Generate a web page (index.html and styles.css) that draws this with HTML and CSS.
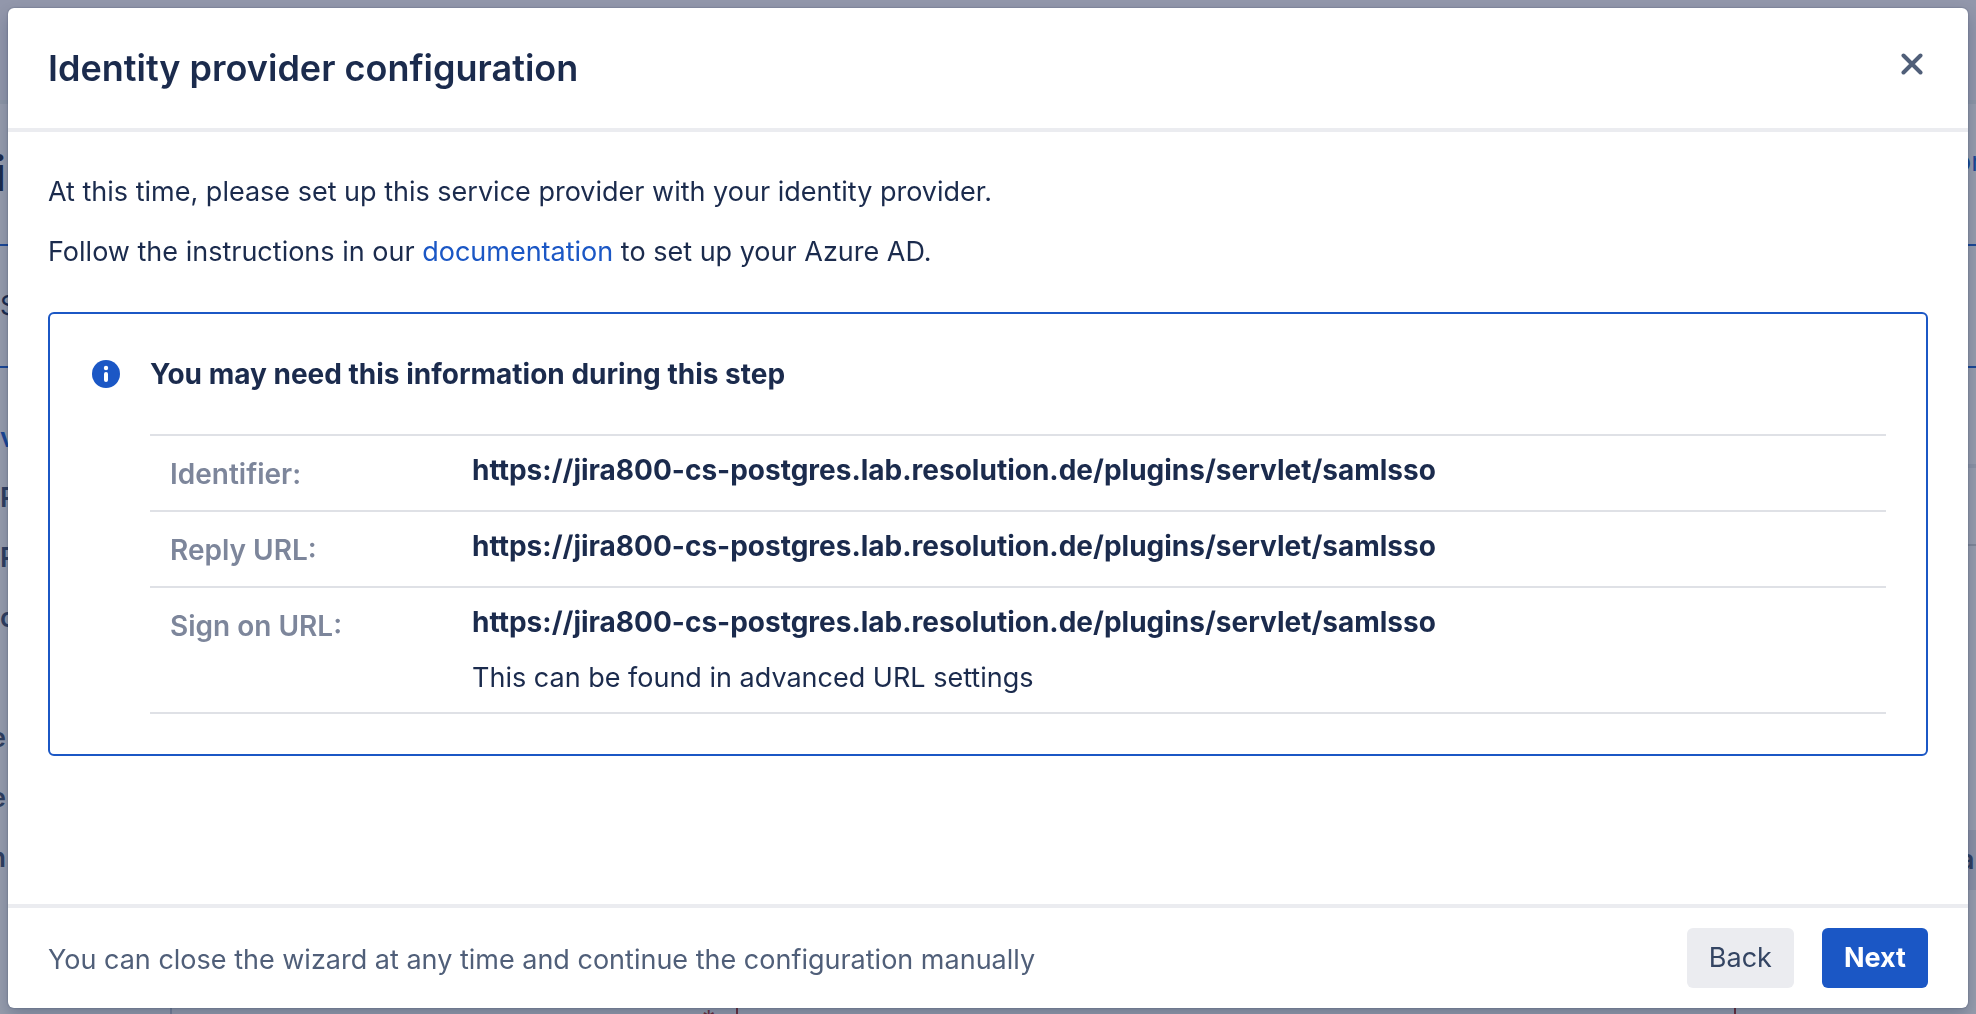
FILE: index.html
```html
<!DOCTYPE html>
<html lang="en">
<head>
<meta charset="utf-8">
<title>Identity provider configuration</title>
<link rel="stylesheet" href="styles.css">
</head>
<body>
<div class="page" aria-hidden="true">
  <div class="page-header"></div>
  <div class="page-title"><span class="heading">i</span><span class="action">or</span></div>
  <div class="page-notice"><span>S</span></div>
  <div class="page-body">
    <div class="side">
      <span class="row tab">v</span>
      <span class="row">R</span>
      <span class="row">R</span>
      <span class="row">c</span>
      <span class="row"></span>
      <span class="row tail">e</span>
      <span class="row tail">e</span>
      <span class="row tail">n</span>
    </div>
    <div class="end">
      <div class="tabs-line"></div>
      <div class="section-line"></div>
      <span class="tag">a</span>
    </div>
  </div>
  <div class="page-form"><span class="required">*</span><span class="field"></span></div>
</div>
<div class="overlay">
  <section class="dialog" role="dialog" aria-labelledby="dialog-title">
    <header class="dialog-header">
      <h1 id="dialog-title">Identity provider configuration</h1>
      <button class="close" type="button" aria-label="Close">
        <svg width="22" height="22" viewBox="0 0 22 22"><path d="M2.500 2.500 19.500 19.500M19.500 2.500 2.500 19.500" fill="none" stroke="currentColor" stroke-width="4" stroke-linecap="round"/></svg>
      </button>
    </header>
    <div class="dialog-body">
      <p>At this time, please set up this service provider with your identity provider.</p>
      <p>Follow the instructions in our <a href="#documentation">documentation</a> to set up your Azure AD.</p>
      <div class="info">
        <svg class="info-icon" width="28" height="28" viewBox="0 0 28 28"><circle cx="14" cy="14" r="14" fill="#1b57c5"/><circle cx="14" cy="8" r="2.200" fill="#fff"/><rect x="12" y="12" width="4" height="10" rx="2" fill="#fff"/></svg>
        <div class="info-content">
          <h2>You may need this information during this step</h2>
          <table>
            <tbody>
              <tr><th scope="row">Identifier:</th><td><strong>https://jira800-cs-postgres.lab.resolution.de/plugins/servlet/samlsso</strong></td></tr>
              <tr><th scope="row">Reply URL:</th><td><strong>https://jira800-cs-postgres.lab.resolution.de/plugins/servlet/samlsso</strong></td></tr>
              <tr><th scope="row">Sign on URL:</th><td><strong>https://jira800-cs-postgres.lab.resolution.de/plugins/servlet/samlsso</strong><div class="hint">This can be found in advanced URL settings</div></td></tr>
            </tbody>
          </table>
        </div>
      </div>
    </div>
    <footer class="dialog-footer">
      <span class="note">You can close the wizard at any time and continue the configuration manually</span>
      <button class="button" type="button">Back</button>
      <button class="button primary" type="button">Next</button>
    </footer>
  </section>
</div>
</body>
</html>
```
FILE: styles.css
```css
* { box-sizing: border-box; }
body {
  margin: 0;
  height: 100vh;
  overflow: hidden;
  color: #1b2b4d;
  font: 27px/40px Inter, "Liberation Sans", sans-serif;
}

/* dimmed page behind the dialog */
.page {
  display: flex;
  flex-direction: column;
  height: 100vh;
  overflow: hidden;
  background: #979dad;
}
.page-header { flex: none; height: 104px; background: #9297ab; border-bottom: 4px solid #8d96a6; }
.page-title { flex: none; display: flex; justify-content: space-between; height: 140px; }
.heading { display: flex; justify-content: flex-end; width: 6px; font-size: 48px; line-height: 140px; font-weight: 600; }
.action { width: 21px; line-height: 116px; color: #1b4795; }
.page-notice { flex: none; height: 124px; padding-top: 40px; border: solid #1b4795; border-width: 2px 0; }
.page-body { flex: 1; display: flex; justify-content: space-between; min-height: 0; }
.side { width: 8px; padding-top: 50px; }
.row { display: block; height: 60px; font-weight: 600; color: #2f3f60; }
.tab { color: #1b4795; }
.tail { display: flex; justify-content: flex-end; padding-right: 2px; }
.end { width: 17px; padding-top: 96px; }
.tabs-line { height: 4px; margin-bottom: 76px; background: #8b93a5; }
.section-line { height: 2px; margin-bottom: 284px; background: #7f8798; }
.tag { display: block; height: 60px; line-height: 60px; background: #8b91a5; color: #2f3f60; font-weight: 600; }
.page-form { flex: none; display: flex; height: 8px; margin: 0 240px 0 170px; padding-left: 530px; border-left: 2px solid #78839a; }
.required { width: 34px; line-height: 30px; color: #6d303c; }
.field { flex: 1; border: solid #6d303c; border-width: 0 2px; }

.overlay { position: fixed; inset: 0; padding: 8px 8px 6px; }
.dialog {
  display: flex;
  flex-direction: column;
  height: 100%;
  border-radius: 6px;
  background: #fff;
  box-shadow: 0 0 2px rgba(9, 30, 66, .4), 0 8px 16px rgba(9, 30, 66, .24);
}
.dialog-header {
  display: flex;
  align-items: flex-start;
  justify-content: space-between;
  height: 124px;
  padding: 40px 45px 0 40px;
  border-bottom: 4px solid #ebecf0;
}
h1 { margin: 0; font-size: 36px; line-height: 40px; font-weight: 600; }
.close { display: flex; margin: 0; padding: 5px 0; border: 0; background: none; color: #505f79; }
.dialog-body { flex: 1; padding: 40px; }
p { margin: 0 0 20px; }
a { color: #1b57c5; text-decoration: none; }
.info {
  display: flex;
  gap: 30px;
  margin-top: 40px;
  padding: 40px 40px 40px 42px;
  border: 2px solid #1b57c5;
  border-radius: 6px;
}
.info-icon { flex: none; margin-top: 6px; }
.info-content { flex: 1; }
h2 { margin: 0 0 40px; font-size: 28px; line-height: 40px; font-weight: 700; }
table { width: 100%; border-collapse: collapse; }
tr { border: solid #dfe1e6; border-width: 2px 0; }
th, td { vertical-align: top; text-align: left; }
th { width: 302px; padding: 18px 20px 16px; color: #7d869b; font-size: 28px; font-weight: 600; }
td { padding: 14px 20px; }
strong { display: block; font-size: 28px; font-weight: 700; }
.hint { margin-top: 16px; }
.dialog-footer {
  display: flex;
  align-items: center;
  height: 104px;
  padding: 0 40px;
  border-top: 4px solid #ebecf0;
}
.note { flex: 1; padding-top: 4px; color: #505f79; }
.button {
  height: 60px;
  margin: 0 0 0 28px;
  padding: 0 22px;
  border: 0;
  border-radius: 6px;
  background: #ebecf0;
  color: #344563;
  font: inherit;
}
.primary { background: #1b57c5; color: #fff; font-weight: 700; }
```
